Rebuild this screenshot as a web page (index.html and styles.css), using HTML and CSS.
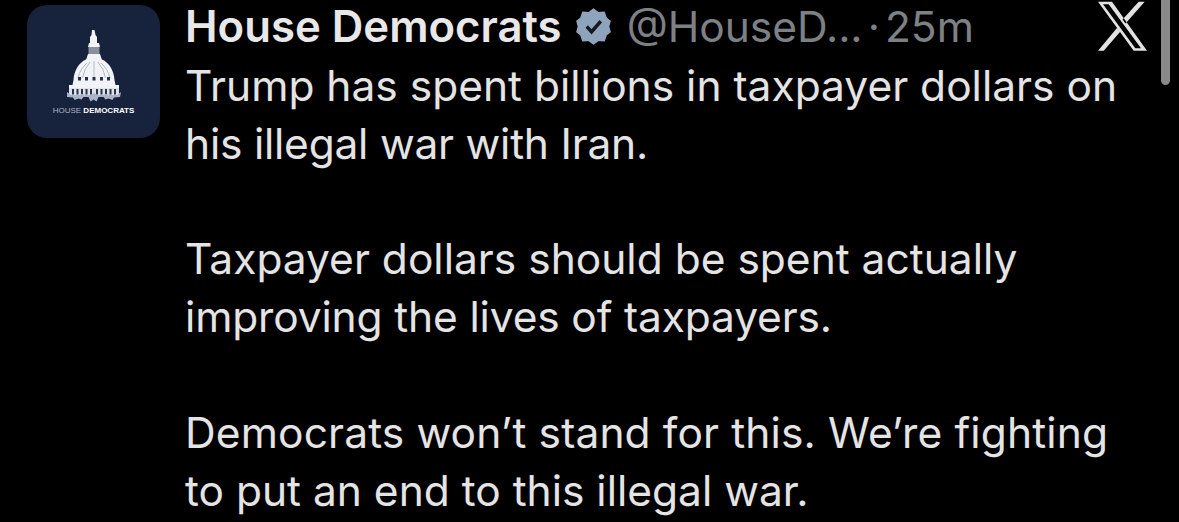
FILE: index.html
```html
<!DOCTYPE html>
<html lang="en">
<head>
<meta charset="utf-8">
<title>House Democrats post</title>
<link rel="stylesheet" href="styles.css">
</head>
<body>
<main class="post">
  <div class="avatar">
    <svg class="capitol" viewBox="0 0 60 74" width="60" height="74" aria-hidden="true">
      <path class="white" d="M28 0h2.500l1 5 1.500 2v6h-7V7l1.500-2z"/>
      <path class="white" d="M25 13h10l1 4H24z"/>
      <rect class="grey" x="24.500" y="17" width="11" height="7"/>
      <path class="white" d="M24 24h12l2 6h-16z"/>
      <path class="white" d="M22 29.500h16c7 3 12 11 12.500 20.500l1 5H8.500l1-5C10 40.500 15 32.500 22 29.500z"/>
      <path class="rib" d="M26 32q-6 7-7.500 16M30 31v17M34 32q6 7 7.500 16M23 33q-7 6-9 15M37 33q7 6 9 15"/>
      <g class="dark"><rect x="14" y="47" width="3" height="3.500"/><rect x="21" y="47" width="3" height="3.500"/><rect x="28.500" y="47" width="3" height="3.500"/><rect x="36" y="47" width="3" height="3.500"/><rect x="43" y="47" width="3" height="3.500"/></g>
      <rect class="white" x="5" y="55" width="50" height="3"/>
      <rect class="pale" x="5" y="58" width="50" height="7"/>
      <g class="dark"><rect x="8" y="59" width="2" height="5.500"/><rect x="12.500" y="59" width="2" height="5.500"/><rect x="17" y="59" width="2" height="5.500"/><rect x="21.500" y="59" width="2" height="5.500"/><rect x="26" y="59" width="2" height="5.500"/><rect x="32" y="59" width="2" height="5.500"/><rect x="36.500" y="59" width="2" height="5.500"/><rect x="41" y="59" width="2" height="5.500"/><rect x="45.500" y="59" width="2" height="5.500"/><rect x="50" y="59" width="2" height="5.500"/></g>
      <path class="star" d="M3 62l4 3h8l3-1 3 1h6l3-2 3 2h6l3-1 3 1h8l4-3-1 5-6 .5-1.500 2.500-4-1.500-3 1-2-2.500h-5l-2 4.500-3-2-3 2-2-4.500h-5l-2 2.500-3-1-4 1.500-1.500-2.500-6-.5z"/>
    </svg>
    <p class="org"><span class="org-light">HOUSE</span> <b>DEMOCRATS</b></p>
  </div>
  <div class="content">
    <header class="head">
      <span class="name">House Democrats</span>
      <svg class="badge" viewBox="0 0 36 36" width="35" height="38" preserveAspectRatio="none" aria-hidden="true">
        <path class="badge-fill" d="M18 2l5 3.500 6-.5 2 5.500 4 3-1.500 5 1.500 5-4 3-2 5.500-6-.5-5 3.500-5-3.500-6 .5-2-5.500-4-3 1.500-5-1.500-5 4-3 2-5.500 6 .5z"/>
        <path class="badge-check" d="M11 18.500l5 5 9.500-10"/>
      </svg>
      <span class="handle">@HouseD...</span>
      <span class="dot">·</span>
      <span class="time">25m</span>
    </header>
    <p class="line"><span class="fit-a">Trump has spent billions in taxpayer dollars on</span><br><span class="fit-b">his illegal war with Iran.</span></p>
    <p class="line"><span class="fit-a">Taxpayer dollars should be spent actually</span><br><span class="fit-c">improving the lives of taxpayers.</span></p>
    <p class="line"><span class="fit-d">Democrats won’t stand for this. We’re fighting</span><br><span class="fit-a">to put an end to this illegal war.</span></p>
  </div>
  <svg class="xlogo" viewBox="0 0 50 50" width="50" height="50" aria-hidden="true">
    <path fill-rule="evenodd" d="M0 .7h14l35 49H35.700zM5 3.300l32.300 44h5.700L10.700 3.300zM40.700 .7h6L27.500 22.500l-3-4zM19 27l3 4L5.700 49.700H0z"/>
  </svg>
</main>
<div class="scrollbar"></div>
</body>
</html>
```
FILE: styles.css
```css
* { box-sizing: border-box; }
html, body { margin: 0; height: 522px; overflow: hidden; background: #000; }
body { position: relative; font-family: Inter, "Liberation Sans", sans-serif; color: #e7e9ea; }
.post { display: flex; padding: 5px 0 0 27px; align-items: flex-start; }
.avatar { width: 133px; height: 133px; flex: none; border-radius: 20px; background: #17223c; display: flex; flex-direction: column; align-items: center; padding-top: 25px; }
.capitol { display: block; }
.white { fill: #f2f3f6; }
.grey { fill: #8a8f9c; }
.pale { fill: #dfe2e8; }
.dark { fill: #2a3248; }
.star { fill: #a9b4c8; }
.rib { fill: none; stroke: #b4b9c6; stroke-width: 1; }
.org { margin: 2px 0 0; font-size: 8px; line-height: 10px; color: #fff; white-space: nowrap; font-family: "Liberation Sans", sans-serif; }
.org-light { color: #aeb6c6; }
.org b { font-weight: 700; }
.content { margin-left: 25px; width: 960px; flex: none; }
.head { display: flex; align-items: center; height: 52px; margin: -5px 0 5px; white-space: nowrap; }
.name { font-size: 43.700px; font-weight: 600; color: #e8e8e8; }
.badge { margin-left: 14px; flex: none; }
.badge-fill { fill: #8ea4bd; stroke: #8ea4bd; stroke-width: 1.500; stroke-linejoin: round; }
.badge-check { fill: none; stroke: #16181c; stroke-width: 3.500; }
.handle, .dot, .time { font-size: 42.500px; color: #7d8084; }
.handle { margin-left: 16px; }
.dot { margin: 0 5px; }
.line { margin: 0 0 57.800px; font-size: 42.500px; line-height: 57.800px; color: #e4e4e4; white-space: nowrap; }
.line:last-child { margin-bottom: 0; }
.fit-b { letter-spacing: -0.230px; }
.fit-c { letter-spacing: -0.150px; }
.fit-d { letter-spacing: 0.130px; }
.xlogo { position: absolute; left: 1098px; top: 1px; }
.xlogo path { fill: #e2e2e2; }
.scrollbar { position: absolute; left: 1161px; top: 0; width: 9px; height: 85px; background: #8a8a8a; border-radius: 0 0 5px 5px; }
```
